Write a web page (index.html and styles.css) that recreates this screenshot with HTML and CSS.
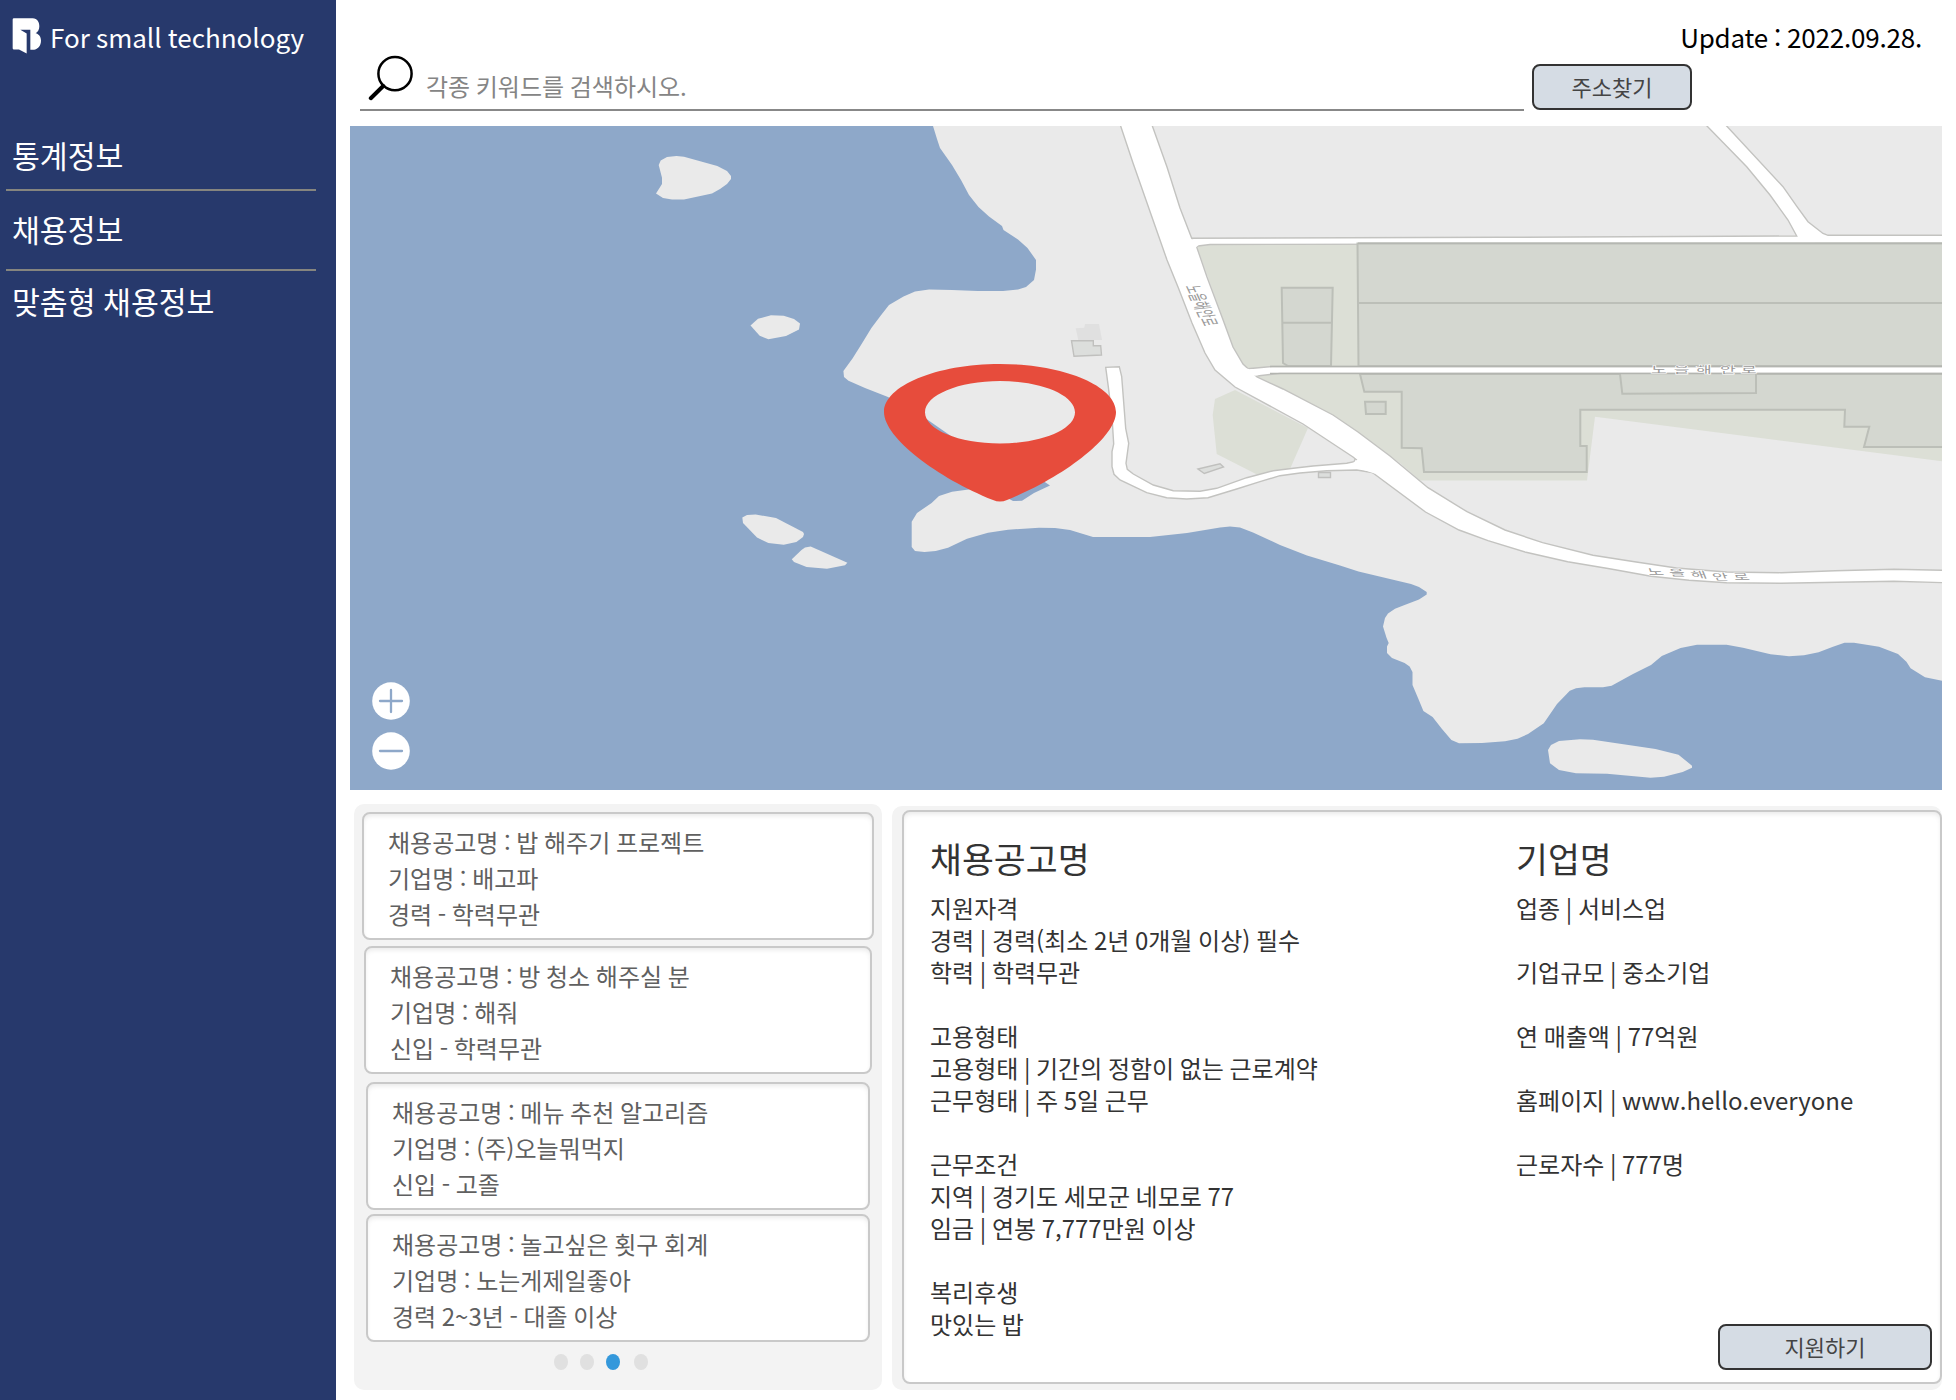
FILE: index.html
```html
<!DOCTYPE html>
<html lang="ko">
<head>
<meta charset="utf-8">
<title>For small technology</title>
<link rel="stylesheet" href="styles.css">
</head>
<body>
<div class="app">
  <aside class="sidebar">
    <div class="brand">
      <svg class="logo" viewBox="36 52 90 110" aria-hidden="true">
        <path fill="#fff" d="M42 55H98C112 55 118 67 118 79C118 89 114 96 107 100C117 102 123 111 123 122C123 139 113 150 97 150H91V90H61L80 101V161L57 149H42Q38 149 38 145V59Q38 55 42 55Z"/>
      </svg>
      <span class="brand-name">For small technology</span>
    </div>
    <nav class="menu">
      <a class="menu-item">통계정보</a>
      <a class="menu-item">채용정보</a>
      <a class="menu-item">맞춤형 채용정보</a>
    </nav>
  </aside>

  <main class="main">
    <header class="header">
      <div class="update">Update : 2022.09.28.</div>
      <div class="search-row">
        <div class="search">
          <svg class="search-icon" viewBox="0 0 48 48" aria-hidden="true">
            <g fill="none" stroke="#000" stroke-linecap="round">
              <circle cx="27" cy="19.7" r="16.6" stroke-width="2.5"/>
              <path d="M15.2 32L2.8 44.2" stroke-width="4"/>
            </g>
          </svg>
          <span class="placeholder">각종 키워드를 검색하시오.</span>
        </div>
        <button class="btn btn-address">주소찾기</button>
      </div>
    </header>

    <section class="map">
      <svg class="map-canvas" viewBox="350 126 1592 664">
        <rect x="350" y="126" width="1592" height="664" fill="#8ea8c9"/>
        <!-- land and islands -->
        <g fill="#eaeaea">
          <path d="M933 126L937 139L940 148L952 165L961 180L969 195L978.5 207L989 216.5L1002 226L1003.500 230L1018 239.500L1027.500 248L1036 260L1036 269.500L1034 280L1026 287L1018 289.500L1003 291L977.500 291L952 290L929 289.500L915 291.400L903.500 296.500L889 305L880.600 315.700L871.400 328L861 345L852.500 358.500L843.400 371L844 377L848.500 380.700L865 388L888 397L926.500 419L949.500 435L985 465L1044 481.500L1050 485.400L1034 493L1022 500.800L1013 501L1000 494L972.400 489L952 491.800L939 496L931.600 503L917 513L911.700 521.700V547L915 551L924.500 552L935.700 551L948 547.800L967 538.800L988 532.800L1008 529.800L1039 527.700L1055 528L1070 530L1093 537H1150L1187 533L1220 527.500L1230 526.500L1240 527.500L1253 532.500L1280 545L1307 555.500L1340 565.500L1358.500 571.500L1411 584L1419 587L1426.700 592V594.500L1419 599.500L1404.600 605L1395 608.700L1388 613.500L1385 618L1383 626.500L1386.600 638L1388.700 643L1387 646.500V653L1392 658L1404.600 663L1409.600 666.500L1412.500 672V685L1418 698L1423.400 711L1432.600 717L1442 729L1451.400 740L1459 743.300L1482 743L1505 741.300L1517.500 738.700L1528 734L1543.800 723.300L1557 704L1569.800 690.700L1576 688.300L1584.400 687.300H1603L1611.600 685.700L1632.500 674.300L1651 665L1661.800 656L1680.600 648L1697 644.700H1726.600L1743 647.700L1770.500 654.300L1789 656.300L1804 655.300L1818.600 652.300L1833 646.700L1844.500 642.700H1854L1879 646.700L1898 654L1906.400 661.700L1910.600 668.300L1925 677.300L1942 680.700V126Z"/>
          <path d="M1548 750L1551 745L1559 741L1580 739.300L1593 739.700L1655.500 749L1678.500 754.700L1692 765.700V767.700L1682.700 772L1664 776.700L1650.500 777.700L1607 773.700L1576 773.300L1559 770L1550 763.300Z"/>
          <path d="M656 193.500L662 184V177.700L658.700 165L660.700 160.600L667 157L676.500 156L684 156.800L717.300 166L727 171L731 176V179L727 184L720 189L712 193.500L684 199.500L672 199.500L663 198Z"/>
          <path d="M750.500 325.500L758 318.700L771 315.300L783.700 315.700L794 319L800 323.500L799 329.400L786 336L768.400 339.200L759.700 335.800Z"/>
          <path d="M742.300 517.400L747 515L755.600 514.400L776 518L803 532L804 534L803 537L796.400 542L783.700 544.800L768.400 543L757 537.500L743 523Z"/>
          <path d="M791.800 559.300L801.500 550L805 547.500L810.700 546.500L847.400 562.700L845 565.300L827 568.700L806.600 567L794 562Z"/>
        </g>
        <!-- industrial lots -->
        <g fill="#dcdfd6">
          <path d="M1196 244H1942V461.300L1595 416.700L1587 480.500H1420L1400 463L1333 415L1257 376L1240 366Z"/>
          <path d="M1215 399L1235 390L1308 428L1290 469L1258 475L1216.700 454L1212.700 415Z"/>
        </g>
        <!-- roads -->
        <g fill="#fff" stroke="#c3c3c0" stroke-width="1.400">
          <path d="M1185 238.300L1500 237.300L1796.700 236L1788 220L1770 195L1746.700 166.700L1706 125L1725.700 125L1783 186.700L1797 206.700L1808 221.700L1823 233.500L1828 235.300H1944V243.500L1210 244.500L1198 246L1185 250Z"/>
          <path d="M1245 369L1272 366.500H1944V373.400H1280L1257 376Z"/>
          <path d="M1105.700 367.300L1108.300 386.700L1112 416.700L1113.700 444L1112 451.700V466.700L1114 474.300L1120 480L1146.700 492.700L1166.700 497.700L1186.700 499L1208 497.700L1236.700 489L1260 481.700L1280 475.700L1300 473L1326.700 470.700L1356.700 470L1375 473L1366 461L1356 457L1354 461.700L1346.700 463.300L1313 466L1293.300 468.300L1273.300 470.700L1246.700 477.700L1216.700 488.300L1200 491.300L1173.300 490.700L1153.300 485L1133.300 474L1127.300 469.300L1126 463.300L1128.700 443.300L1125.700 428.300L1121.700 376.700L1119.300 366.700Z"/>
          <path d="M1120.300 125L1133 163L1167 260L1178 287L1192 323L1205 353L1215 370L1235 387L1303 424L1353 457L1373 473L1425.500 512L1459 530L1488 540.700L1526 552.300L1567.700 561.700L1609.500 568.700L1651 576.300L1689 580.300L1726.600 582.700L1781 583.300L1894 581.300L1944 582.700V570.300L1894 569.300L1835 570.700L1781 572.700L1726.600 572L1676.400 568L1634.600 561.700L1593 555.300L1542.600 542.700L1505 530L1467 511.700L1428 487.700L1390 456L1358 432L1333 415L1283 389L1257 377L1243 364L1233 347L1222 317L1207 277L1196.700 247L1191.700 238.300L1180 208L1167 167L1152 125Z"/>
        </g>
        <!-- open the junction mouths onto the main road -->
        <g fill="#fff">
          <path d="M1185 239L1194 239.200L1200 243.500L1199 244.800L1194 249L1186 244Z"/>
          <path d="M1240 367L1250 369.200L1257 369L1260 374.800L1256 375.800L1247 375Z"/>
          <path d="M1352 464L1358 459L1376 474L1362 469.500Z"/>
        </g>
        <!-- buildings -->
        <g fill="#d4d7d0" stroke="#bcbfb8" stroke-width="2">
          <path d="M1357.500 243.500H1944V366H1358.500Z"/>
          <path d="M1358 303H1942"/>
          <path d="M1281.700 287.700H1332.700L1331 366H1288L1283 363Z"/>
          <path d="M1282 322.700H1332"/>
          <path d="M1360 374L1364.300 391.700H1401.700V447.700L1421.700 448.300L1424 472H1586.700V446H1580.300V409.700H1845L1844.300 426.700H1869.300L1864 447H1944V374Z"/>
          <path d="M1620 374L1622.300 393.700L1756 393V374"/>
          <path d="M1365 401.700H1385.700V414H1366Z"/>
        </g>
        <g fill="#dcdedc" stroke="#c0c0be" stroke-width="1.400">
          <path d="M1318.500 472.500H1330.500V477.500H1318.500Z"/>
          <path d="M1198 469L1220 463.800L1223.500 467L1204.300 473.500Z"/>
          <path d="M1071.500 340.700H1093.300V345.700H1100.700L1101.500 355L1074 356.300Z"/>
        </g>
        <path d="M1075.700 328.300L1084.300 327.700L1085 324H1099L1102 340H1078.300Z" fill="#e0e0e0"/>
        <path d="M1270 366.500H1942M1270 373.500H1942M1358 243.200H1942" stroke="#b3b5b0" stroke-width="1.300"/>
        <!-- road names -->
        <g class="road-name">
          <text transform="translate(1651 373) scale(1.9 1)" x="0 12 23.700 36.300 47.400" y="0">노을해안로</text>
          <text transform="translate(1649 574.500) scale(1.9 1) skewX(12)" x="0 11 22 33 44" y="0 1.200 3.500 5 5.500">노을해안로</text>
          <text transform="translate(1185 286) scale(2.200 1) rotate(78)" x="0 8.300 16.600 25 33.200" y="0">노을해안로</text>
        </g>
      </svg>
      <svg class="pin" viewBox="884 364 232 138">
        <path fill="#e74c3c" fill-rule="evenodd" d="M1000 364C1064 364 1116 386 1116 412C1116 438 1062 478 1007 500Q1000 503 993 500C938 478 884 438 884 412C884 386 936 364 1000 364ZM1000 381C958.600 381 925 395 925 412.300S958.600 443.500 1000 443.500S1075 429.600 1075 412.300S1041.400 381 1000 381Z"/>
      </svg>
      <div class="zoom">
        <svg class="zoom-btn" viewBox="0 0 38 38"><circle cx="19" cy="19" r="18.800" fill="#fff"/><path d="M8 19H30M19 8V30" stroke="#8ea8c9" stroke-width="2.300" stroke-linecap="round"/></svg>
        <svg class="zoom-btn" viewBox="0 0 38 38"><circle cx="19" cy="19" r="18.800" fill="#fff"/><path d="M8 19H30" stroke="#8ea8c9" stroke-width="2.300" stroke-linecap="round"/></svg>
      </div>
    </section>

    <section class="panels">
      <div class="list-panel">
        <article class="card card-wide">
          <p>채용공고명 : 밥 해주기 프로젝트</p>
          <p>기업명 : 배고파</p>
          <p>경력 - 학력무관</p>
        </article>
        <article class="card card-medium">
          <p>채용공고명 : 방 청소 해주실 분</p>
          <p>기업명 : 해줘</p>
          <p>신입 - 학력무관</p>
        </article>
        <article class="card card-narrow">
          <p>채용공고명 : 메뉴 추천 알고리즘</p>
          <p>기업명 : (주)오늘뭐먹지</p>
          <p>신입 - 고졸</p>
        </article>
        <article class="card card-last">
          <p>채용공고명 : 놀고싶은 횟구 회계</p>
          <p>기업명 : 노는게제일좋아</p>
          <p>경력 2~3년 - 대졸 이상</p>
        </article>
        <div class="pager">
          <span class="dot"></span>
          <span class="dot"></span>
          <span class="dot dot-active"></span>
          <span class="dot dot-end"></span>
        </div>
      </div>

      <div class="detail-panel">
        <div class="detail">
          <div class="detail-col detail-job">
            <h2 class="detail-title">채용공고명</h2>
            <div class="group">
              <p>지원자격</p>
              <p>경력 | 경력(최소 2년 0개월 이상) 필수</p>
              <p>학력 | 학력무관</p>
            </div>
            <div class="group">
              <p>고용형태</p>
              <p>고용형태 | 기간의 정함이 없는 근로계약</p>
              <p>근무형태 | 주 5일 근무</p>
            </div>
            <div class="group">
              <p>근무조건</p>
              <p>지역 | 경기도 세모군 네모로 77</p>
              <p>임금 | 연봉 7,777만원 이상</p>
            </div>
            <div class="group">
              <p>복리후생</p>
              <p>맛있는 밥</p>
            </div>
          </div>
          <div class="detail-col detail-company">
            <h2 class="detail-title">기업명</h2>
            <p class="group">업종 | 서비스업</p>
            <p class="group">기업규모 | 중소기업</p>
            <p class="group">연 매출액 | 77억원</p>
            <p class="group">홈페이지 | www.hello.everyone</p>
            <p class="group">근로자수 | 777명</p>
            <button class="btn btn-apply">지원하기</button>
          </div>
        </div>
      </div>
    </section>
  </main>
</div>
</body>
</html>
```
FILE: styles.css
```css
* {
  box-sizing: border-box;
}

body {
  margin: 0;
  background: #fff;
  font-family: "Noto Sans CJK KR", "Noto Sans", sans-serif;
  word-spacing: -1.1px;
}

p,
h2 {
  margin: 0;
  font-weight: 400;
}

.app {
  display: grid;
  grid-template-columns: 336px 1fr;
  height: 1400px;
}

.sidebar {
  background: #27396c;
  color: #fff;
}

.brand {
  display: flex;
  align-items: flex-start;
  height: 126px;
  padding: 17px 0 0 12px;
}

.logo {
  width: 30px;
  height: 37px;
}

.brand-name {
  margin-left: 8px;
  font-size: 26px;
  line-height: 40px;
  white-space: nowrap;
}

.menu {
  display: flex;
  flex-direction: column;
  padding: 0 20px 0 6px;
}

.menu-item {
  height: 80px;
  padding: 8px 0 0 6px;
  font-size: 30.3px;
  line-height: 44px;
  border-bottom: 2px solid #85857f;
}

.menu-item:first-child {
  height: 65px;
  padding-top: 7px;
}

.menu-item:nth-child(2) {
  padding-top: 16px;
}

.menu-item:last-child {
  border-bottom: 0;
}

.main {
  display: flex;
  flex-direction: column;
  padding: 0 14px;
}

.header {
  height: 126px;
}

.update {
  height: 54px;
  padding: 17px 20px 0 0;
  font-size: 26px;
  line-height: 40px;
  letter-spacing: -0.2px;
  color: #000;
  text-align: right;
}

.search-row {
  display: flex;
  gap: 8px;
  padding-left: 10px;
}

.search {
  display: flex;
  width: 1164px;
  height: 57px;
  padding-left: 8px;
  border-bottom: 2px solid #888;
}

.search-icon {
  width: 48px;
  height: 48px;
}

.placeholder {
  margin-left: 10px;
  padding-top: 14px;
  font-size: 24px;
  line-height: 36px;
  color: #858585;
}

.btn {
  padding: 0 0 2px;
  font-family: inherit;
  font-size: 22px;
  line-height: 32px;
  color: #444;
  background: #d5dce4;
  border: 2px solid #333;
  border-radius: 8px;
}

.btn-address {
  width: 160px;
  height: 46px;
  margin-top: 10px;
}

.map {
  position: relative;
  height: 664px;
}

.map-canvas {
  display: block;
  width: 1592px;
  height: 664px;
}

.road-name {
  font-size: 9px;
  fill: #999;
  stroke: #fff;
  stroke-width: 1px;
  paint-order: stroke;
}

.pin {
  position: absolute;
  left: 534px;
  top: 238px;
  width: 232px;
  height: 138px;
}

.zoom {
  position: absolute;
  left: 22px;
  top: 556px;
  display: flex;
  flex-direction: column;
  gap: 12px;
}

.zoom-btn {
  width: 38px;
  height: 38px;
}

.panels {
  display: flex;
  align-items: flex-end;
  gap: 10px;
  height: 600px;
  padding-left: 4px;
}

.list-panel {
  display: flex;
  flex-direction: column;
  width: 528px;
  height: 586px;
  padding: 8px 8px 0;
  background: #f3f3f3;
  border-radius: 10px;
}

.card {
  flex: none;
  height: 128px;
  padding: 10px 0 0 24px;
  font-size: 24px;
  line-height: 36px;
  color: #606060;
  background: #fff;
  border: 2px solid #c9c9c9;
  border-radius: 8px;
  box-shadow: inset 0 3px 5px -1px rgba(0, 0, 0, 0.09);
}

.card-wide {
  margin-bottom: 6px;
}

.card-medium {
  margin: 0 2px 8px;
}

.card-narrow {
  margin: 0 4px 4px;
}

.card-last {
  margin: 0 4px;
}

.pager {
  display: flex;
  gap: 12px;
  padding: 12px 0 0 192px;
}

.dot {
  width: 14px;
  height: 16px;
  background: #e0e0e0;
  border-radius: 50%;
}

.dot-active {
  background: #3498db;
}

.dot-end {
  margin-left: 2px;
}

.detail-panel {
  width: 1050px;
  height: 584px;
  padding: 4px 0 6px 10px;
  background: #f3f3f3;
  border-radius: 10px;
}

.detail {
  display: flex;
  height: 574px;
  padding: 22px 8px 12px 26px;
  font-size: 24px;
  line-height: 32px;
  color: #333;
  background: #fff;
  border: 2px solid #c9c9c9;
  border-radius: 8px;
  box-shadow: inset 0 3px 5px -1px rgba(0, 0, 0, 0.09);
}

.detail-job {
  width: 586px;
}

.detail-company {
  display: flex;
  flex: 1;
  flex-direction: column;
}

.detail-title {
  margin-bottom: 10px;
  font-size: 34.7px;
  line-height: 48px;
}

.group {
  margin-bottom: 32px;
}

.btn-apply {
  align-self: flex-end;
  width: 214px;
  height: 46px;
  margin-top: auto;
}
```
